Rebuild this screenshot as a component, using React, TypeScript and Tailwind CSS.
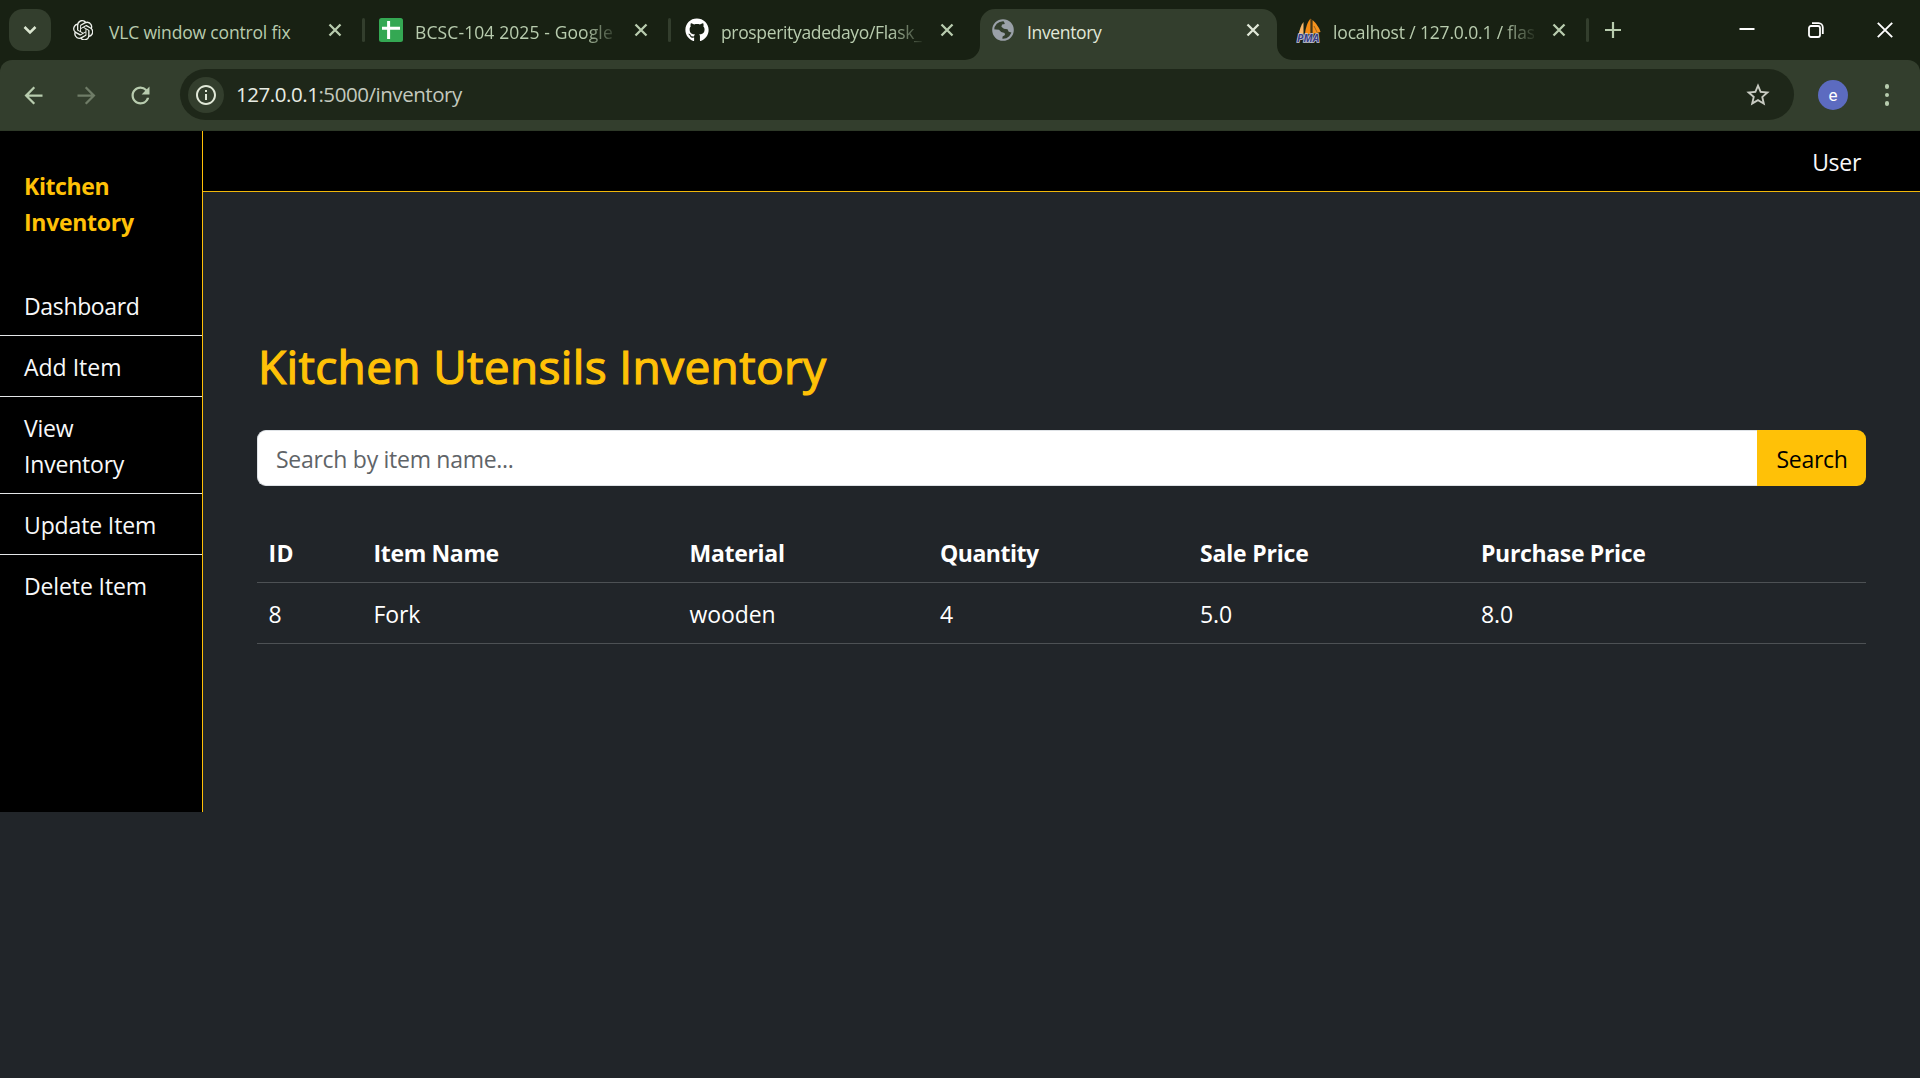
import type { ReactNode } from "react";
import { SiOpenai } from "react-icons/si";
import { FaGithub } from "react-icons/fa";
import { MdArrowBack, MdArrowForward, MdInfoOutline, MdRefresh, MdStarOutline } from "react-icons/md";

function SheetIcon() {
  return (
    <svg viewBox="0 0 24 24" className="size-6">
      <rect width="24" height="24" rx="2.5" fill="#34a853" />
      <path d="M3 10.3h18M9.6 3v18" stroke="#fff" strokeWidth="3" />
    </svg>
  );
}

function GlobeIcon() {
  return (
    <svg viewBox="0 0 22 22" className="size-[22px]">
      <circle cx="11" cy="11" r="9.8" fill="none" stroke="#9aa0a8" strokeWidth="2" />
      <path d="M11.5 1.2C17 1.4 20.8 5.5 20.8 11c0 1.2-.2 2-.5 2.8l-3.6-1-1.2-2.6-3.6-.4-2.5-2 .6-2.4 2.8-.4z" fill="#9aa0a8" />
      <path d="M1.2 10.2 7 10.8l2.2 2.3 3.4.8.4 2.2-2.4 1.4-.4 3.3C5 20.6 1.2 16.5 1.2 10.2z" fill="#9aa0a8" />
    </svg>
  );
}

function SailsIcon() {
  return (
    <span className="relative block size-6">
      <svg viewBox="0 0 24 24" className="size-6">
        <path d="M1.5 17C2.5 12 4 7 6.500 4L6.500 16z" fill="#f9b86a" />
        <path d="M8 16C8.500 10 10.500 4 13.500 .5L13.500 16z" fill="#f58a12" />
        <path d="M15.500 2c3.500 3 7 8 8 12l-8 2z" fill="#f7931e" />
        <path d="M14 1v15M17 8l3 6" stroke="#8a5a20" strokeWidth=".8" />
      </svg>
      <span className="absolute bottom-0 left-0 text-[10.500px] leading-[8px] font-bold italic text-[#3b3f86] [paint-order:stroke] [-webkit-text-stroke:1.500px_#c9cad8]">
        PMA
      </span>
    </span>
  );
}

function Cross({ className }: { className: string }) {
  return (
    <svg viewBox="0 0 14 14" className={`size-3.5 ${className}`}>
      <path d="M1.5 1.5l11 11M12.5 1.5l-11 11" stroke="currentColor" strokeWidth="2.3" />
    </svg>
  );
}

type TabProps = {
  icon: ReactNode;
  title: string;
  tracking: string;
  active?: boolean;
  fade?: boolean;
  divider?: boolean;
};

function Tab({ icon, title, tracking, active, fade, divider }: TabProps) {
  return (
    <div className={`relative flex h-[51px] w-[306px] shrink-0 items-start ${active ? "text-[#e1e8d8]" : "text-[#b8ccae]"}`}>
      {active && (
        <svg viewBox="0 0 327 51" className="absolute top-0 -left-3 h-[51px] w-[327px]">
          <path d="M0 51a15 15 0 0 0 15-15V15A15 15 0 0 1 30 0h267a15 15 0 0 1 15 15v21a15 15 0 0 0 15 15z" fill="#333e2d" />
        </svg>
      )}
      <div className="relative mt-[9px] ml-3.5 flex size-6 items-center justify-center">{icon}</div>
      <div
        className={`relative mt-2.5 ml-3 w-[201px] text-[17.5px] leading-[26px] whitespace-nowrap ${tracking} ${fade ? "[mask-image:linear-gradient(to_right,black_84%,transparent_102%)]" : ""}`}
      >
        {title}
      </div>
      <Cross className="relative mt-[14px] ml-[17.500px]" />
      {divider && <div className="relative mt-[9px] ml-auto h-6 w-[3px] rounded bg-[#333e2d]" />}
    </div>
  );
}

function TabStrip() {
  return (
    <div className="flex h-[60px] bg-[#182113] pt-[9px] pl-[9px]">
      <button className="mr-2 flex size-[42px] shrink-0 items-center justify-center rounded-[14px] bg-[#333e2d]">
        <svg viewBox="0 0 14 10" className="h-2.5 w-3.5">
          <path d="M1.5 2l5.5 5.5L12.5 2" fill="none" stroke="#dbe6d0" strokeWidth="2.500" />
        </svg>
      </button>
      <Tab icon={<SiOpenai className="-ml-1 size-[20.500px] text-[#eef1ec]" />} title="VLC window control fix" tracking="tracking-[-0.170px]" divider />
      <Tab icon={<SheetIcon />} title="BCSC-104 2025 - Google" tracking="tracking-[0.110px]" fade divider />
      <Tab icon={<FaGithub className="size-6 text-white" />} title="prosperityadedayo/Flask_" tracking="tracking-[-0.345px]" fade />
      <Tab icon={<GlobeIcon />} title="Inventory" tracking="tracking-[-0.355px]" active />
      <Tab icon={<SailsIcon />} title="localhost / 127.0.0.1 / flas" tracking="tracking-[-0.160px]" fade divider />
      <svg viewBox="0 0 16 16" className="mt-[13px] ml-4 size-4">
        <path d="M8 0v16M0 8h16" stroke="#b8ccae" strokeWidth="2.200" />
      </svg>
      <div className="ml-auto flex gap-[53px] pt-[13px] pr-[27px] text-white">
        <svg viewBox="0 0 16 16" className="size-4">
          <path d="M.5 7h15" stroke="currentColor" strokeWidth="2" />
        </svg>
        <svg viewBox="0 0 16 16" className="size-4" fill="none" stroke="currentColor" strokeWidth="1.800">
          <rect x="1" y="4" width="11" height="11" rx="2" />
          <path d="M4 1.200h6.500a4.300 4.300 0 0 1 4.300 4.300V12" />
        </svg>
        <svg viewBox="0 0 16 16" className="size-4">
          <path d="M.8.8l14.400 14.400M15.200.8L.8 15.200" stroke="currentColor" strokeWidth="1.900" />
        </svg>
      </div>
    </div>
  );
}

function Toolbar() {
  return (
    <div className="bg-[#182113]">
      <div className="flex h-[71px] items-start rounded-t-[12px] border-b border-[#2e3928] bg-[#333e2d] pt-[9px] text-[#b8ccae]">
        <MdArrowBack className="mt-[12.500px] ml-[19.500px] size-[27px]" />
        <MdArrowForward className="mt-[12.500px] ml-[26.500px] size-[27px] text-[#6f7c67]" />
        <MdRefresh className="mt-[12.500px] ml-[27px] size-[27px]" />
        <div className="ml-[26px] flex h-[51px] w-[1614px] items-center rounded-full bg-[#1e2719] pl-2">
          <div className="flex size-9 items-center justify-center rounded-full bg-[#333e2d]">
            <MdInfoOutline className="size-6 text-[#e1e8d8]" />
          </div>
          <span className="ml-3 pb-px text-[20.5px] tracking-[-0.450px] text-[#c3c9be]">
            <span className="text-[#e8ece4]">127.0.0.1</span>:5000/inventory
          </span>
          <MdStarOutline className="mr-[22px] ml-auto size-7 text-[#c8cbc2]" />
        </div>
        <div className="mt-[11px] ml-6 flex size-[30px] items-center justify-center rounded-full bg-[#5c6bc0] font-['Roboto'] text-[17px] leading-none text-white">
          e
        </div>
        <div className="mt-[15px] ml-[36.500px] flex flex-col gap-1">
          <i className="size-[4.500px] rounded-full bg-[#b8ccae]" />
          <i className="size-[4.500px] rounded-full bg-[#b8ccae]" />
          <i className="size-[4.500px] rounded-full bg-[#b8ccae]" />
        </div>
      </div>
    </div>
  );
}

const NAV = [
  { label: "Dashboard", tracking: "tracking-[-0.350px]" },
  { label: "Add Item", tracking: "tracking-normal" },
  { label: "View Inventory", tracking: "tracking-[-0.200px]" },
  { label: "Update Item", tracking: "tracking-[-0.130px]" },
  { label: "Delete Item", tracking: "tracking-[-0.120px]" },
];

function Sidebar() {
  return (
    <aside className="h-[681px] w-[203px] shrink-0 border-r border-[#ffc107] bg-black pt-[37px] leading-9 text-[#f8f9fa]">
      <div className="mb-[35px] px-6 font-bold text-[#ffc107]">
        <div className="tracking-[-0.385px]">Kitchen</div>
        <div className="tracking-[-0.280px]">Inventory</div>
      </div>
      <nav>
        {NAV.map((n) => (
          <a key={n.label} className={`block border-b border-[#e4e6e8] pt-[13px] pr-10 pb-[11px] pl-6 last:border-0 ${n.tracking}`}>
            {n.label}
          </a>
        ))}
      </nav>
    </aside>
  );
}

const COLUMNS = [
  { head: "ID", tracking: "tracking-[0.5px]", cell: "8", width: "w-[105px]" },
  { head: "Item Name", tracking: "tracking-[-0.350px]", cell: "Fork", width: "w-[316px]" },
  { head: "Material", tracking: "tracking-[-0.300px]", cell: "wooden", width: "w-[250.500px]" },
  { head: "Quantity", tracking: "tracking-[-0.490px]", cell: "4", width: "w-[260px]" },
  { head: "Sale Price", tracking: "tracking-[-0.180px]", cell: "5.0", width: "w-[281px]" },
  { head: "Purchase Price", tracking: "tracking-[-0.340px]", cell: "8.0", width: "w-[396.500px]" },
];

function ItemTable() {
  return (
    <table className="mt-9 w-[1609px] table-fixed border-separate border-spacing-0 text-left leading-9 text-white">
      <thead>
        <tr>
          {COLUMNS.map((c) => (
            <th key={c.head} className={`border-b border-[#4d5154] pt-[13px] pb-[11px] pl-[11.500px] font-bold ${c.width} ${c.tracking}`}>
              {c.head}
            </th>
          ))}
        </tr>
      </thead>
      <tbody>
        <tr>
          {COLUMNS.map((c) => (
            <td key={c.head} className="border-b border-[#4d5154] pt-[13px] pb-[11px] pl-[11.500px] tracking-[-0.100px]">
              {c.cell}
            </td>
          ))}
        </tr>
      </tbody>
    </table>
  );
}

export default function App() {
  return (
    <div className="h-[1078px] w-[1920px] overflow-hidden bg-[#212529] font-['Open_Sans','Noto_Sans',sans-serif]">
      <TabStrip />
      <Toolbar />
      <div className="flex text-[23px]">
        <Sidebar />
        <div className="flex-1">
          <header className="flex h-[61px] justify-end border-b border-[#f0b70a] bg-black pt-[13px] pr-[59px] leading-9 tracking-[-0.300px] text-[#f8f9fa]">
            User
          </header>
          <main className="pt-[145px] pl-[54px]">
            <h1 className="mb-[35px] ml-px text-[46px] leading-[58px] font-normal tracking-[0.350px] text-[#ffc107] [-webkit-text-stroke:1.200px_#ffc107]">
              Kitchen Utensils Inventory
            </h1>
            <form className="flex h-14 w-[1609px]">
              <input
                placeholder="Search by item name..."
                className="w-[1500px] rounded-l-[9px] border border-r-0 border-[#dee2e6] bg-white pt-0.5 pl-[18px] tracking-[-0.280px] placeholder:text-[#5f6468]"
              />
              <button type="button" className="flex-1 rounded-r-[9px] bg-[#ffc107] pt-0.5 pl-px tracking-[-0.300px] text-black">
                Search
              </button>
            </form>
            <ItemTable />
          </main>
        </div>
      </div>
    </div>
  );
}
